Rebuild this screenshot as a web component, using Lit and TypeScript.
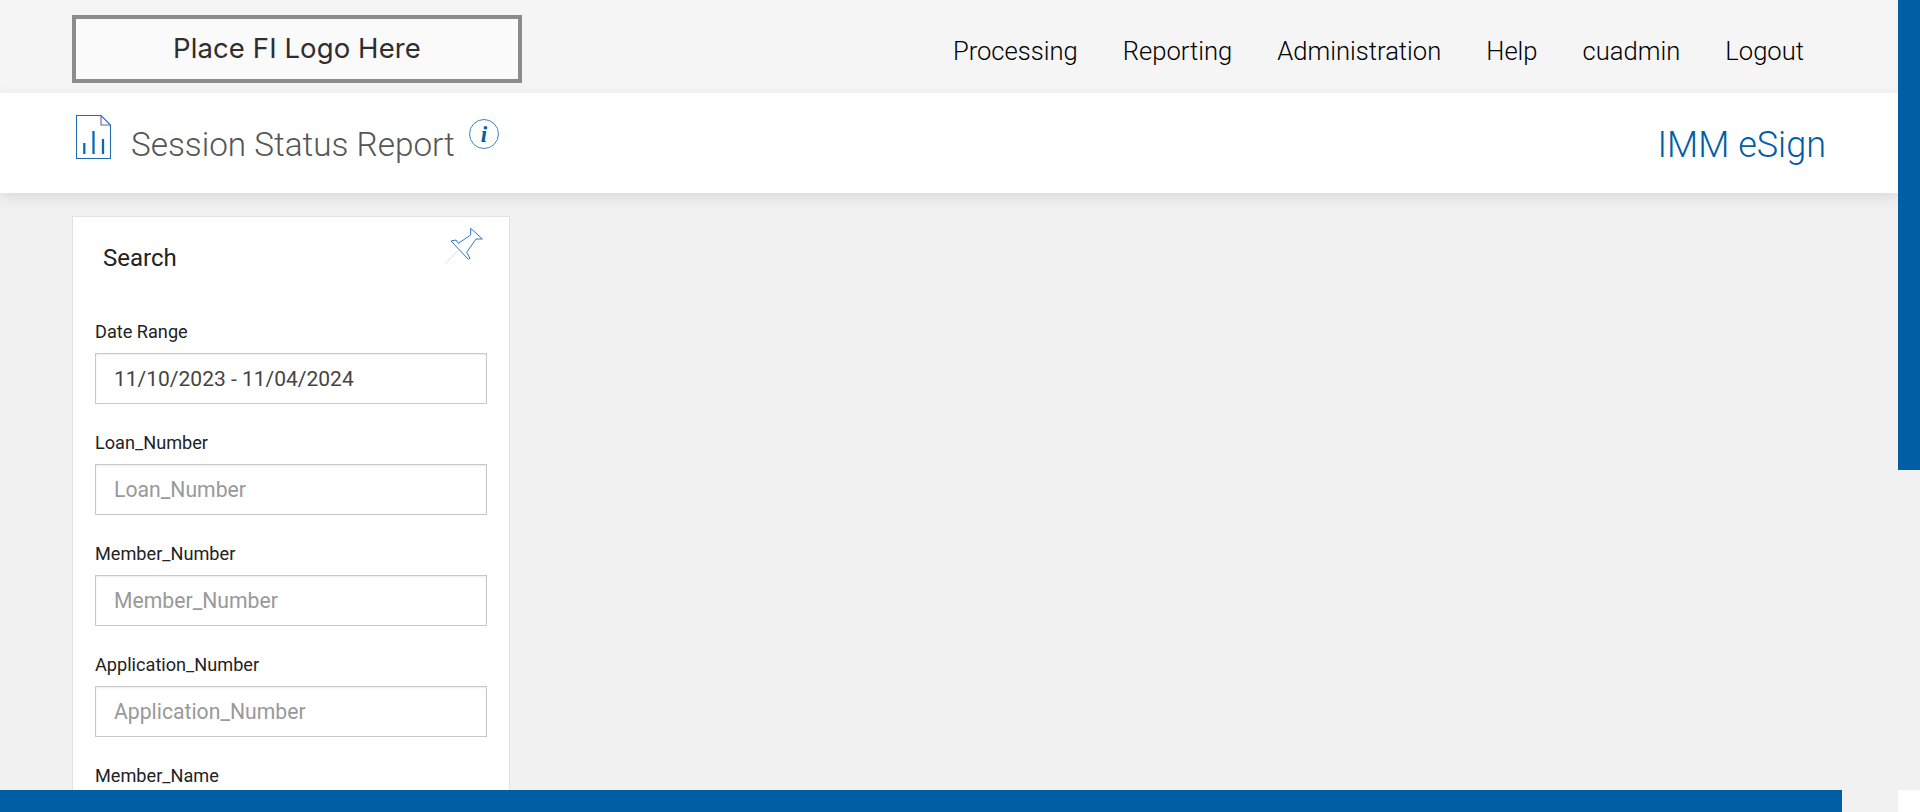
import { LitElement, html, css } from "lit";
import { customElement } from "lit/decorators.js";

const FIELDS = [
  { label: "Date Range", value: "11/10/2023 - 11/04/2024", placeholder: "" },
  { label: "Loan_Number", value: "", placeholder: "Loan_Number" },
  { label: "Member_Number", value: "", placeholder: "Member_Number" },
  { label: "Application_Number", value: "", placeholder: "Application_Number" },
  { label: "Member_Name", value: "", placeholder: "Member_Name" },
];
const NAV = ["Processing", "Reporting", "Administration", "Help", "cuadmin", "Logout"];

@customElement("app-root")
export class AppRoot extends LitElement {
  static styles = css`
    :host {
      display: flex;
      position: relative;
      width: 100%;
      height: 812px;
      overflow: hidden;
      background: #f1f1f1;
      font-family: Roboto, "Liberation Sans", sans-serif;
    }
    * { box-sizing: border-box; }
    .main { flex: 1; min-width: 0; display: flex; flex-direction: column; }
    .rail { width: 22px; flex: none; display: flex; flex-direction: column; background: #f1f1f1; position: relative; z-index: 3; }
    .thumb { height: 470px; background: #005ea5; }
    .track { flex: 1; }
    .corner { height: 22px; background: #fff; }
    .top {
      height: 93px; flex: none; background: #f5f5f5;
      display: flex; justify-content: space-between; align-items: flex-start;
      padding: 15px 94px 0 72px;
    }
    .logo {
      width: 450px; height: 68px; border: 4px solid #8c8c8c; background: #fafafa;
      display: flex; align-items: center; justify-content: center;
      font-family: Inter, sans-serif; font-size: 27.5px; font-weight: 400; color: #2e2e2e; letter-spacing: 0.1px;
      padding-bottom: 3px;
    }
    nav { display: flex; gap: 45px; margin-top: 21px; }
    nav a { font-size: 25.6px; font-weight: 300; line-height: 30px; color: #000; white-space: nowrap; }
    .sub {
      height: 100px; flex: none; background: #fff;
      box-shadow: 0 4px 14px rgba(0, 0, 0, 0.1);
      display: flex; justify-content: space-between; align-items: flex-start;
      padding: 0 72px 0 76px; position: relative; z-index: 1;
    }
    .heading { display: flex; align-items: flex-start; }
    .doc { width: 35px; height: 44px; margin-top: 22px; flex: none; }
    h1 {
      margin: 0 0 0 20px; padding-top: 30px;
      font-size: 33.3px; line-height: 44px; font-weight: 300; color: #555; white-space: nowrap;
    }
    .info { width: 30px; height: 30px; margin: 26px 0 0 14px; flex: none; }
    .brand { font-size: 36px; font-weight: 300; line-height: 44px; color: #005ea5; padding-top: 30px; white-space: nowrap; }
    .content { flex: 1; min-height: 0; padding: 23px 0 0 72px; }
    .card {
      position: relative; width: 438px; background: #fff; border: 1px solid #e2e2e2;
      padding: 26px 22px 0;
    }
    h2 { margin: 0 0 47px 8px; font-size: 24px; line-height: 30px; font-weight: 400; color: #222; }
    .pin { position: absolute; right: 9px; top: -2px; width: 60px; height: 60px; }
    .field { margin-bottom: 27px; }
    label { display: block; font-size: 18.15px; line-height: 24px; color: #222; margin-bottom: 9px; }
    input {
      display: block; width: 100%; height: 51px; border: 1px solid #c8c8c8; border-radius: 0;
      padding: 0 18px; outline: none; background: #fff;
      box-shadow: inset 0 1px 2px rgba(0, 0, 0, 0.08);
      font-family: inherit; font-size: 21px; color: #444;
    }
    input::placeholder { color: #999; opacity: 1; font-size: 21.2px; }
    .bottom { position: absolute; left: 0; bottom: 0; width: 1842px; height: 22px; background: #005ea5; z-index: 2; }
  `;

  render() {
    return html`
      <div class="main">
        <header class="top">
          <div class="logo">Place FI Logo Here</div>
          <nav>${NAV.map((n) => html`<a>${n}</a>`)}</nav>
        </header>
        <div class="sub">
          <div class="heading">
            <svg class="doc" viewBox="0 0 35 44" fill="none">
              <path d="M.5.5H25L34.5 10V43.5H.5Z" stroke="#1f6cb0" stroke-width="1.1"/>
              <path d="M25 .5V10H34.5" stroke="#5f62b0" stroke-width="1.1"/>
              <path d="M8.3 28V39M17.5 16V39M27 24V39" stroke="#0a6ab5" stroke-width="2.3"/>
            </svg>
            <h1>Session Status Report</h1>
            <svg class="info" viewBox="0 0 30 30" fill="none">
              <circle cx="15" cy="15" r="14.5" stroke="#3a85c4" stroke-width="1"/>
              <text x="15" y="23" text-anchor="middle" font-family="Liberation Serif, serif" font-style="italic" font-weight="700" font-size="23" fill="#005ea5">i</text>
            </svg>
          </div>
          <div class="brand">IMM eSign</div>
        </div>
        <div class="content">
          <section class="card">
            <h2>Search</h2>
            <svg class="pin" viewBox="0 0 180 180" fill="none">
              <path d="M33 78L48 75L55 85L92 60V40L127 72H108L80 112L90 130L85 133Z" stroke="#2a78c4" stroke-width="3" stroke-linejoin="round"/>
              <path d="M55 105L15 148" stroke="#c4cede" stroke-width="2"/>
            </svg>
            ${FIELDS.map(
              (f) => html`<div class="field">
                <label>${f.label}</label>
                <input .value=${f.value} placeholder=${f.placeholder} />
              </div>`
            )}
          </section>
        </div>
      </div>
      <aside class="rail">
        <div class="thumb"></div>
        <div class="track"></div>
        <div class="corner"></div>
      </aside>
      <div class="bottom"></div>
    `;
  }
}
